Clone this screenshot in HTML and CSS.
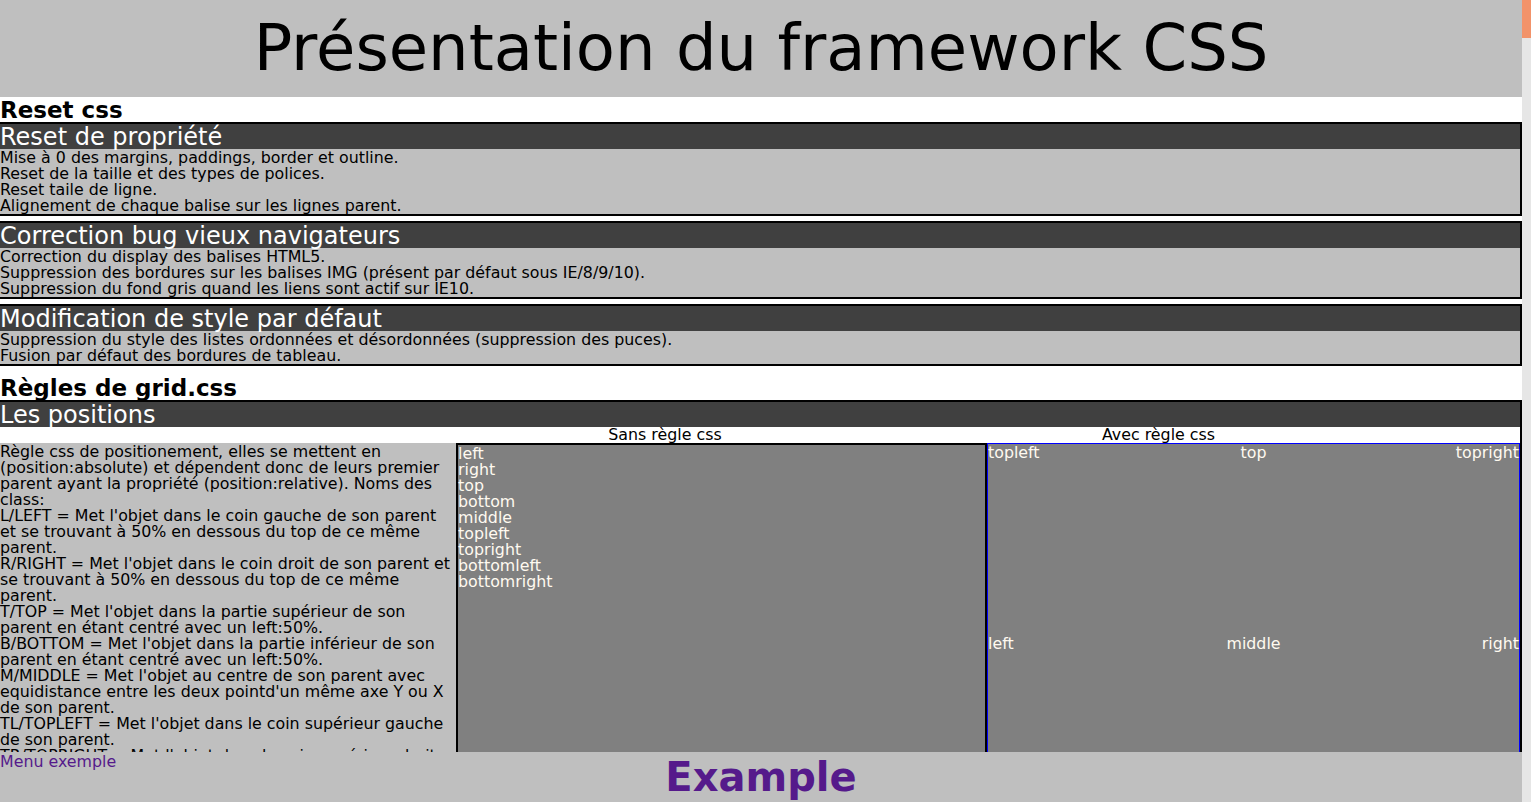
FILE: index.html
```html
<!DOCTYPE html>
<html lang="fr">
<head>
<meta charset="utf-8">
<title>Présentation du framework CSS</title>
<link rel="stylesheet" href="styles.css">
</head>
<body>
<header class="site-header">
  <h1 class="site-title">Présentation du framework CSS</h1>
</header>
<main class="page">
  <section class="topic">
    <h2 class="topic-title">Reset css</h2>
    <article class="block">
      <h3 class="block-title">Reset de propriété</h3>
      <div class="block-body">
        <p>Mise à 0 des margins, paddings, border et outline.</p>
        <p>Reset de la taille et des types de polices.</p>
        <p>Reset taile de ligne.</p>
        <p>Alignement de chaque balise sur les lignes parent.</p>
      </div>
    </article>
    <article class="block">
      <h3 class="block-title">Correction bug vieux navigateurs</h3>
      <div class="block-body">
        <p>Correction du display des balises HTML5.</p>
        <p>Suppression des bordures sur les balises IMG (présent par défaut sous IE/8/9/10).</p>
        <p>Suppression du fond gris quand les liens sont actif sur IE10.</p>
      </div>
    </article>
    <article class="block">
      <h3 class="block-title">Modification de style par défaut</h3>
      <div class="block-body">
        <p>Suppression du style des listes ordonnées et désordonnées (suppression des puces).</p>
        <p>Fusion par défaut des bordures de tableau.</p>
      </div>
    </article>
  </section>
  <section class="topic">
    <h2 class="topic-title">Règles de grid.css</h2>
    <article class="block block-open">
      <h3 class="block-title">Les positions</h3>
      <div class="captions">
        <span class="caption caption-sans">Sans règle css</span>
        <span class="caption caption-avec">Avec règle css</span>
      </div>
      <div class="demo">
        <div class="demo-text">
          <p>Règle css de positionement, elles se mettent en (position:absolute) et dépendent donc de leurs premier parent ayant la propriété (position:relative). Noms des class:</p>
          <p>L/LEFT = Met l'objet dans le coin gauche de son parent et se trouvant à 50% en dessous du top de ce même parent.</p>
          <p>R/RIGHT = Met l'objet dans le coin droit de son parent et se trouvant à 50% en dessous du top de ce même parent.</p>
          <p>T/TOP = Met l'objet dans la partie supérieur de son parent en étant centré avec un left:50%.</p>
          <p>B/BOTTOM = Met l'objet dans la partie inférieur de son parent en étant centré avec un left:50%.</p>
          <p>M/MIDDLE = Met l'objet au centre de son parent avec equidistance entre les deux pointd'un même axe Y ou X de son parent.</p>
          <p>TL/TOPLEFT = Met l'objet dans le coin supérieur gauche de son parent.</p>
          <p>TR/TOPRIGHT = Met l'objet dans le coin supérieur droit de son parent.</p>
          <p>BL/BOTTOMLEFT = Met l'objet dans le coin inférieur gauche de son parent.</p>
          <p>BR/BOTTOMRIGHT = Met l'objet dans le coin inférieur droit de son parent.</p>
        </div>
        <div class="demo-box demo-sans">
          <div>left</div>
          <div>right</div>
          <div>top</div>
          <div>bottom</div>
          <div>middle</div>
          <div>topleft</div>
          <div>topright</div>
          <div>bottomleft</div>
          <div>bottomright</div>
        </div>
        <div class="demo-box demo-avec">
          <div class="pos pos-left">left</div>
          <div class="pos pos-right">right</div>
          <div class="pos pos-top">top</div>
          <div class="pos pos-bottom">bottom</div>
          <div class="pos pos-middle">middle</div>
          <div class="pos pos-topleft">topleft</div>
          <div class="pos pos-topright">topright</div>
          <div class="pos pos-bottomleft">bottomleft</div>
          <div class="pos pos-bottomright">bottomright</div>
        </div>
      </div>
    </article>
  </section>
</main>
<footer class="site-footer">
  <a class="footer-menu" href="#">Menu exemple</a>
  <a class="footer-example" href="#">Example</a>
</footer>
<div class="scrollbar" aria-hidden="true"><div class="scrollbar-thumb"></div></div>
</body>
</html>
```
FILE: styles.css
```css
* {
  box-sizing: border-box;
}

body {
  margin: 0 9px 0 0;
  font-family: "DejaVu Sans", Verdana, sans-serif;
  font-size: 15.84px;
  line-height: 16px;
  color: #000;
  background: #fff;
}

p, h1, h2, h3 {
  margin: 0;
}

.site-header {
  background: #bfbfbf;
  height: 97px;
}

.site-title {
  font-size: 64px;
  font-weight: normal;
  line-height: 97px;
  text-align: center;
}

.page {
  padding-bottom: 50px;
}

.topic {
  padding-bottom: 4px;
}

.topic-title {
  font-size: 23px;
  font-weight: bold;
  line-height: 26px;
  height: 25px;
}

.block {
  border-top: 2px solid #000;
  border-right: 2px solid #000;
  border-bottom: 3px solid #000;
  margin-bottom: 5px;
}

.block-open {
  border-bottom: 0;
}

.block-title {
  background: #404040;
  color: #fff;
  font-size: 24px;
  font-weight: normal;
  line-height: 26px;
  height: 25px;
}

.block-body {
  background: #bfbfbf;
  padding-top: 1px;
  margin-bottom: -1px;
}

.captions {
  display: grid;
  grid-template-columns: 533px 264px 1fr;
  height: 16px;
  background: #fff;
}

.caption {
  white-space: nowrap;
}

.caption-sans {
  grid-column: 2;
  justify-self: center;
}

.caption-avec {
  grid-column: 3;
  justify-self: center;
}

.demo {
  display: flex;
  align-items: flex-start;
}

.demo-text {
  width: 456px;
  flex: none;
  background: #bfbfbf;
  min-height: 400px;
  padding-top: 1px;
}

.demo-box {
  background: #808080;
  color: #fffaf0;
  height: 402px;
}

.demo-sans {
  width: 531px;
  flex: none;
  border: 2px solid #000;
  padding-top: 1px;
}

.demo-avec {
  flex: 1;
  position: relative;
  border: 1px solid #0000ff;
}

.pos {
  position: absolute;
  white-space: nowrap;
}

.pos-topleft { top: 1px; left: 0; }
.pos-top { top: 1px; left: 50%; transform: translateX(-50%); }
.pos-topright { top: 1px; right: 0; }
.pos-left { top: 50%; left: 0; transform: translateY(-50%); }
.pos-middle { top: 50%; left: 50%; transform: translate(-50%, -50%); }
.pos-right { top: 50%; right: 0; transform: translateY(-50%); }
.pos-bottomleft { bottom: 0; left: 0; }
.pos-bottom { bottom: 0; left: 50%; transform: translateX(-50%); }
.pos-bottomright { bottom: 0; right: 0; }

.site-footer {
  position: fixed;
  left: 0;
  right: 9px;
  bottom: 0;
  height: 50px;
  background: #bfbfbf;
  display: grid;
}

.site-footer a {
  grid-area: 1 / 1;
  color: #551a8b;
  text-decoration: none;
}

.footer-menu {
  justify-self: start;
  align-self: start;
  font-size: 15.84px;
  line-height: 20px;
}

.footer-example {
  justify-self: center;
  font-size: 40px;
  font-weight: bold;
  line-height: 50px;
}

.scrollbar {
  position: fixed;
  top: 0;
  right: 0;
  width: 9px;
  height: 100vh;
  background: #e6e6e6;
}

.scrollbar-thumb {
  height: 38px;
  background: #f2936a;
}
```
